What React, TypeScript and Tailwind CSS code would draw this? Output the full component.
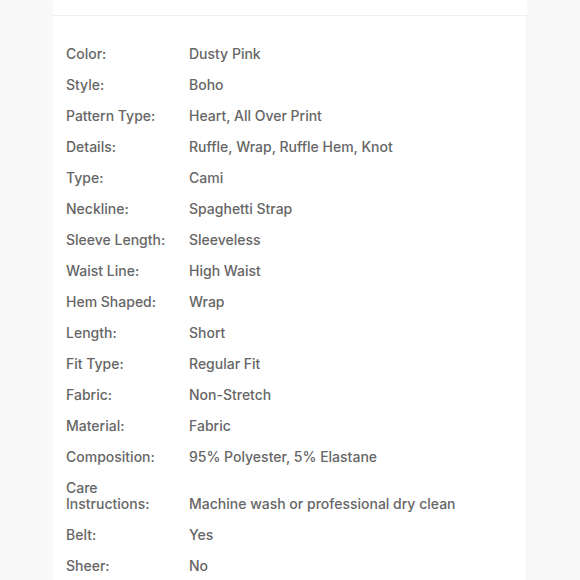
import React from "react";

interface SpecRow {
  label: string;
  value: string;
}

const specs: SpecRow[] = [
  { label: "Color:", value: "Dusty Pink" },
  { label: "Style:", value: "Boho" },
  { label: "Pattern Type:", value: "Heart, All Over Print" },
  { label: "Details:", value: "Ruffle, Wrap, Ruffle Hem, Knot" },
  { label: "Type:", value: "Cami" },
  { label: "Neckline:", value: "Spaghetti Strap" },
  { label: "Sleeve Length:", value: "Sleeveless" },
  { label: "Waist Line:", value: "High Waist" },
  { label: "Hem Shaped:", value: "Wrap" },
  { label: "Length:", value: "Short" },
  { label: "Fit Type:", value: "Regular Fit" },
  { label: "Fabric:", value: "Non-Stretch" },
  { label: "Material:", value: "Fabric" },
  { label: "Composition:", value: "95% Polyester, 5% Elastane" },
  { label: "Care Instructions:", value: "Machine wash or professional dry clean" },
  { label: "Belt:", value: "Yes" },
  { label: "Sheer:", value: "No" },
];

const App: React.FC = () => {
  return (
    <div
      className="min-h-[580px] w-[580px] overflow-hidden bg-[#f9f9f9]"
      style={{ fontFamily: "Inter, 'Noto Sans', sans-serif" }}
    >
      <div className="mx-[53px] -mt-[32px] bg-white">
        {/* header, mostly scrolled out of view */}
        <div className="flex h-[48px] items-center justify-center border-b border-[#f0f0f0]">
          <span className="text-[15px] text-[#555]">Description</span>
        </div>

        <div className="pl-[13px] pr-4 pt-[22px] pb-6 border-r border-[#f3f3f3]">
          {specs.map((row) => (
            <div
              key={row.label}
              className="flex items-end py-[7.5px] text-[14px] font-medium leading-4 text-[#666]"
            >
              <div className="w-[123px] shrink-0 pr-2">{row.label}</div>
              <div className="flex-1">{row.value}</div>
            </div>
          ))}
        </div>
      </div>
    </div>
  );
};

export default App;
